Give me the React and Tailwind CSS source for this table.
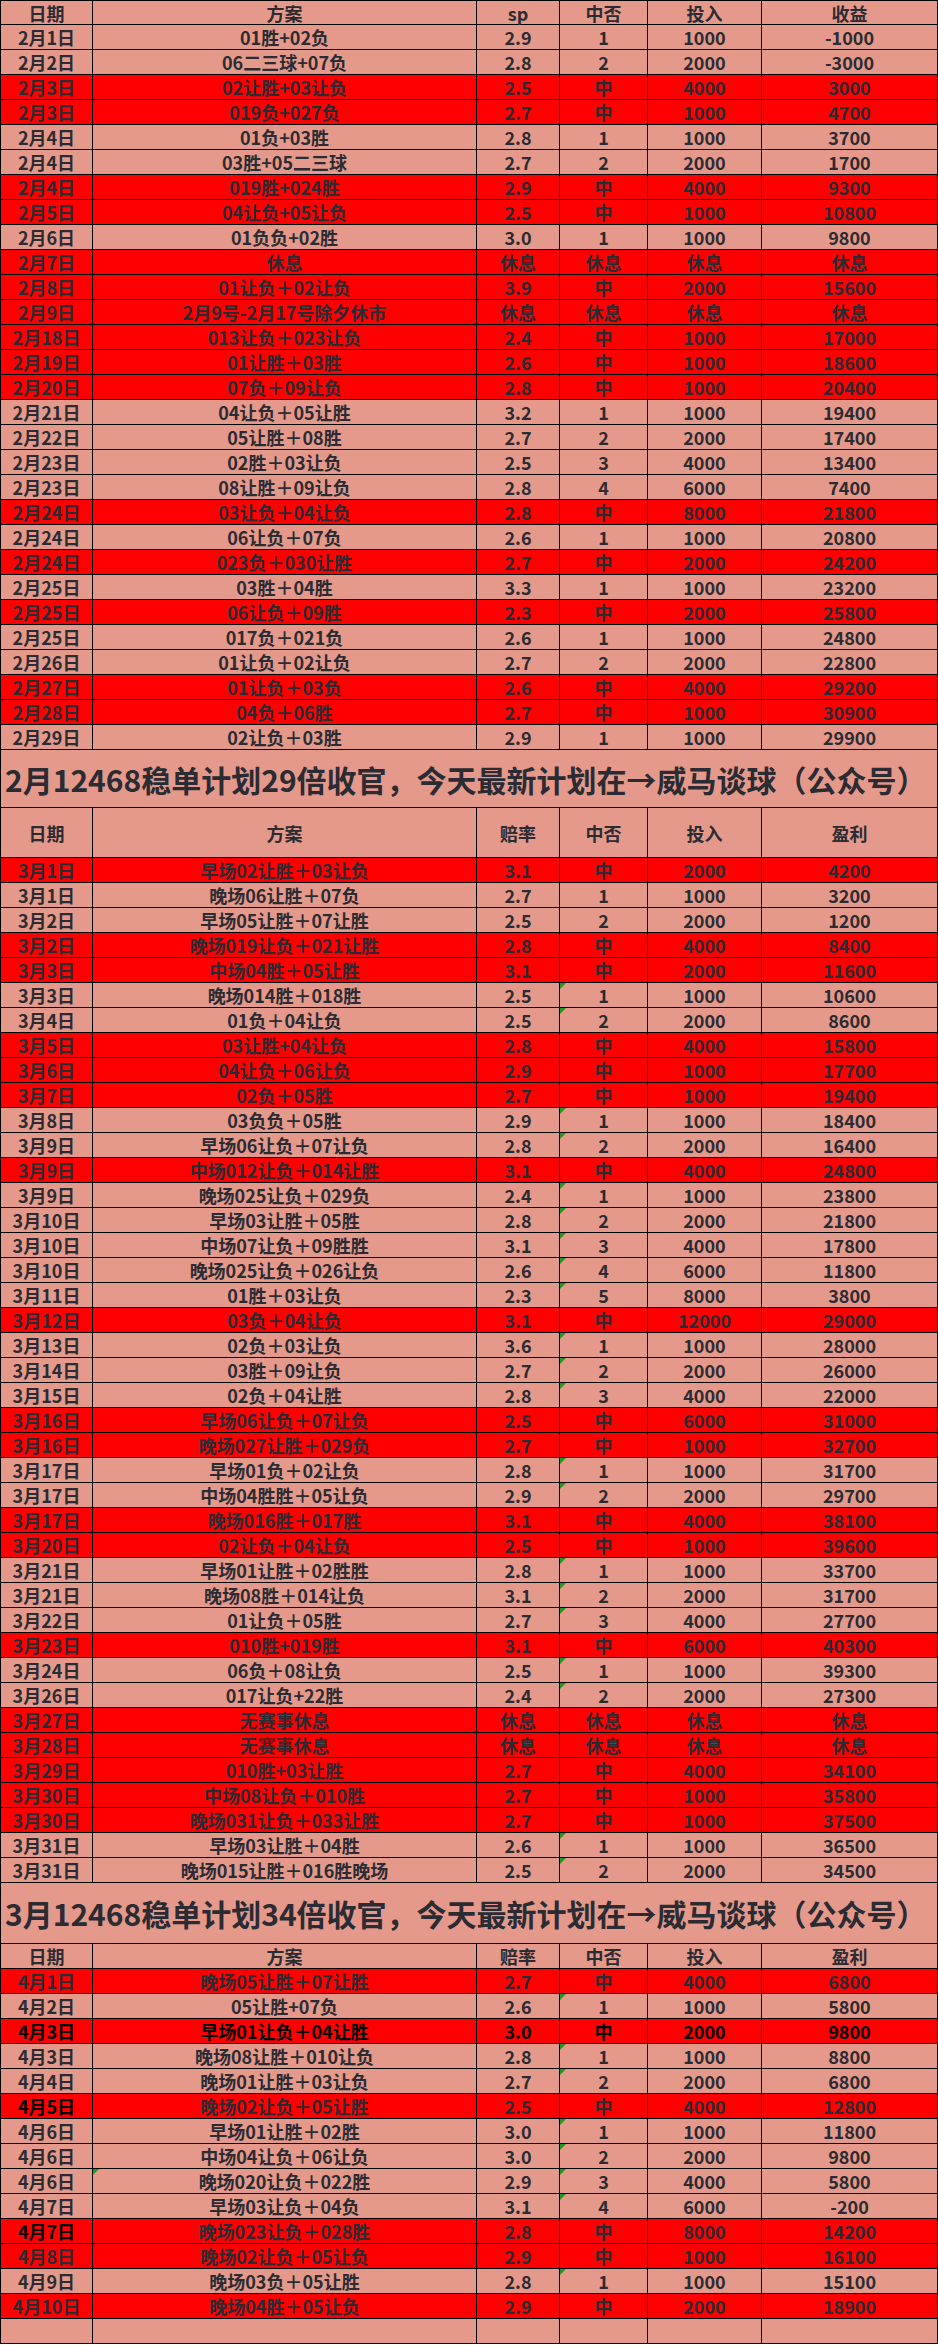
const feb = [
  "2月1日|01胜+02负|2.9|1|1000|-1000|S",
  "2月2日|06二三球+07负|2.8|2|2000|-3000|S",
  "2月3日|02让胜+03让负|2.5|中|4000|3000|R",
  "2月3日|019负+027负|2.7|中|1000|4700|R",
  "2月4日|01负+03胜|2.8|1|1000|3700|S",
  "2月4日|03胜+05二三球|2.7|2|2000|1700|S",
  "2月4日|019胜+024胜|2.9|中|4000|9300|R",
  "2月5日|04让负+05让负|2.5|中|1000|10800|R",
  "2月6日|01负负+02胜|3.0|1|1000|9800|S",
  "2月7日|休息|休息|休息|休息|休息|R",
  "2月8日|01让负＋02让负|3.9|中|2000|15600|R",
  "2月9日|2月9号-2月17号除夕休市|休息|休息|休息|休息|R",
  "2月18日|013让负＋023让负|2.4|中|1000|17000|R",
  "2月19日|01让胜＋03胜|2.6|中|1000|18600|R",
  "2月20日|07负＋09让负|2.8|中|1000|20400|R",
  "2月21日|04让负＋05让胜|3.2|1|1000|19400|S",
  "2月22日|05让胜＋08胜|2.7|2|2000|17400|S",
  "2月23日|02胜＋03让负|2.5|3|4000|13400|S",
  "2月23日|08让胜＋09让负|2.8|4|6000|7400|S",
  "2月24日|03让负＋04让负|2.8|中|8000|21800|R",
  "2月24日|06让负＋07负|2.6|1|1000|20800|S",
  "2月24日|023负＋030让胜|2.7|中|2000|24200|R",
  "2月25日|03胜＋04胜|3.3|1|1000|23200|S",
  "2月25日|06让负＋09胜|2.3|中|2000|25800|R",
  "2月25日|017负＋021负|2.6|1|1000|24800|S",
  "2月26日|01让负＋02让负|2.7|2|2000|22800|S",
  "2月27日|01让负＋03负|2.6|中|4000|29200|R",
  "2月28日|04负＋06胜|2.7|中|1000|30900|R",
  "2月29日|02让负＋03胜|2.9|1|1000|29900|S",
];

const mar = [
  "3月1日|早场02让胜＋03让负|3.1|中|2000|4200|R",
  "3月1日|晚场06让胜＋07负|2.7|1|1000|3200|S",
  "3月2日|早场05让胜＋07让胜|2.5|2|2000|1200|S",
  "3月2日|晚场019让负＋021让胜|2.8|中|4000|8400|R",
  "3月3日|中场04胜＋05让胜|3.1|中|2000|11600|R",
  "3月3日|晚场014胜＋018胜|2.5|1|1000|10600|Sg",
  "3月4日|01负＋04让负|2.5|2|2000|8600|Sg",
  "3月5日|03让胜+04让负|2.8|中|4000|15800|R",
  "3月6日|04让负＋06让负|2.9|中|1000|17700|R",
  "3月7日|02负＋05胜|2.7|中|1000|19400|R",
  "3月8日|03负负＋05胜|2.9|1|1000|18400|Sg",
  "3月9日|早场06让负＋07让负|2.8|2|2000|16400|Sg",
  "3月9日|中场012让负＋014让胜|3.1|中|4000|24800|R",
  "3月9日|晚场025让负＋029负|2.4|1|1000|23800|Sg",
  "3月10日|早场03让胜＋05胜|2.8|2|2000|21800|Sg",
  "3月10日|中场07让负＋09胜胜|3.1|3|4000|17800|Sg",
  "3月10日|晚场025让负＋026让负|2.6|4|6000|11800|Sg",
  "3月11日|01胜＋03让负|2.3|5|8000|3800|Sg",
  "3月12日|03负＋04让负|3.1|中|12000|29000|R",
  "3月13日|02负＋03让负|3.6|1|1000|28000|Sg",
  "3月14日|03胜＋09让负|2.7|2|2000|26000|Sg",
  "3月15日|02负＋04让胜|2.8|3|4000|22000|Sg",
  "3月16日|早场06让负＋07让负|2.5|中|6000|31000|R",
  "3月16日|晚场027让胜＋029负|2.7|中|1000|32700|R",
  "3月17日|早场01负＋02让负|2.8|1|1000|31700|Sg",
  "3月17日|中场04胜胜＋05让负|2.9|2|2000|29700|Sg",
  "3月17日|晚场016胜＋017胜|3.1|中|4000|38100|R",
  "3月20日|02让负＋04让负|2.5|中|1000|39600|R",
  "3月21日|早场01让胜＋02胜胜|2.8|1|1000|33700|Sg",
  "3月21日|晚场08胜＋014让负|3.1|2|2000|31700|Sg",
  "3月22日|01让负＋05胜|2.7|3|4000|27700|Sg",
  "3月23日|010胜+019胜|3.1|中|6000|40300|R",
  "3月24日|06负＋08让负|2.5|1|1000|39300|Sg",
  "3月26日|017让负+22胜|2.4|2|2000|27300|Sg",
  "3月27日|无赛事休息|休息|休息|休息|休息|R",
  "3月28日|无赛事休息|休息|休息|休息|休息|R",
  "3月29日|010胜+03让胜|2.7|中|4000|34100|R",
  "3月30日|中场08让负＋010胜|2.7|中|1000|35800|R",
  "3月30日|晚场031让负＋033让胜|2.7|中|1000|37500|R",
  "3月31日|早场03让胜＋04胜|2.6|1|1000|36500|Sg",
  "3月31日|晚场015让胜＋016胜晚场|2.5|2|2000|34500|Sg",
];

const apr = [
  "4月1日|晚场05让胜＋07让胜|2.7|中|4000|6800|R",
  "4月2日|05让胜+07负|2.6|1|1000|5800|Sg",
  "4月3日|早场01让负＋04让胜|3.0|中|2000|9800|Rb",
  "4月3日|晚场08让胜＋010让负|2.8|1|1000|8800|Sg",
  "4月4日|晚场01让胜＋03让负|2.7|2|2000|6800|Sg",
  "4月5日|晚场02让负＋05让胜|2.5|中|4000|12800|Rd",
  "4月6日|早场01让胜＋02胜|3.0|1|1000|11800|Sg",
  "4月6日|中场04让负＋06让负|3.0|2|2000|9800|Sg",
  "4月6日|晚场020让负＋022胜|2.9|3|4000|5800|Sgm",
  "4月7日|早场03让负＋04负|3.1|4|6000|-200|Sg",
  "4月7日|晚场023让负＋028胜|2.8|中|8000|14200|Rd",
  "4月8日|晚场02让负＋05让负|2.9|中|1000|16100|R",
  "4月9日|晚场03负＋05让胜|2.8|1|1000|15100|Sg",
  "4月10日|晚场04胜＋05让负|2.9|中|2000|18900|R",
  "||||||S",
];

const widths = ["w-[93px]", "w-[384px]", "w-[83px]", "w-[88px]", "w-[114px]", "w-[176px]"];

const Mark = () => (
  <span className="absolute left-0 top-0 h-0 w-0 border-t-[6px] border-r-[6px] border-t-[#1f9a1f] border-r-transparent" />
);

const Row = ({ line, first }) => {
  const parts = line.split("|");
  const flags = parts[6];
  const red = flags.includes("R");
  const bg = red ? "bg-[#ff0000]" : "bg-[#e5998b]";
  return (
    <div className={`flex h-[25px] ${bg} ${first ? "border-t border-black" : ""}`}>
      {parts.slice(0, 6).map((c, i) => {
        let color = "text-[#2b2b33]";
        if (flags.includes("b") || (flags.includes("d") && i === 0)) color = "text-black";
        return (
          <div
            key={i}
            className={`relative flex items-center justify-center border-b border-r border-black ${widths[i]} ${
              i === 0 ? "border-l" : ""
            } ${color}`}
          >
            {i === 3 && flags.includes("g") && <Mark />}
            {i === 1 && flags.includes("m") && <Mark />}
            {c}
          </div>
        );
      })}
    </div>
  );
};

const Header = ({ labels, tall }) => (
  <div className={`flex bg-[#e5998b] ${tall ? "h-[50px]" : "h-[25px]"}`}>
    {labels.map((c, i) => (
      <div
        key={i}
        className={`flex items-center justify-center border-b border-r border-black text-[#2b2b33] ${widths[i]} ${
          i === 0 ? "border-l" : ""
        }`}
      >
        {c}
      </div>
    ))}
  </div>
);

const Title = ({ text, h }) => (
  <div
    className={`flex items-center overflow-hidden whitespace-nowrap border-b border-l border-r border-black bg-[#e5998b] pl-[4px] text-[30px] text-[#2b2b33] ${h}`}
  >
    {text}
  </div>
);

export default function App() {
  const heads = ["日期", "方案", "赔率", "中否", "投入", "盈利"];
  return (
    <div className="w-[938px] bg-white font-['Noto_Sans_CJK_SC','Noto_Sans',sans-serif] text-[18px] font-bold leading-none">
      <div className="flex h-[25px] bg-[#e5998b] border-t border-black">
        {["日期", "方案", "sp", "中否", "投入", "收益"].map((c, i) => (
          <div
            key={i}
            className={`flex items-center justify-center border-b border-r border-black text-[#2b2b33] ${widths[i]} ${
              i === 0 ? "border-l" : ""
            }`}
          >
            {c}
          </div>
        ))}
      </div>
      {feb.map((l, i) => (
        <Row key={"f" + i} line={l} />
      ))}
      <Title text="2月12468稳单计划29倍收官，今天最新计划在→威马谈球（公众号）" h="h-[58px]" />
      <Header labels={heads} tall />
      {mar.map((l, i) => (
        <Row key={"m" + i} line={l} />
      ))}
      <Title text="3月12468稳单计划34倍收官，今天最新计划在→威马谈球（公众号）" h="h-[61px]" />
      <Header labels={heads} />
      {apr.map((l, i) => (
        <Row key={"a" + i} line={l} />
      ))}
    </div>
  );
}
